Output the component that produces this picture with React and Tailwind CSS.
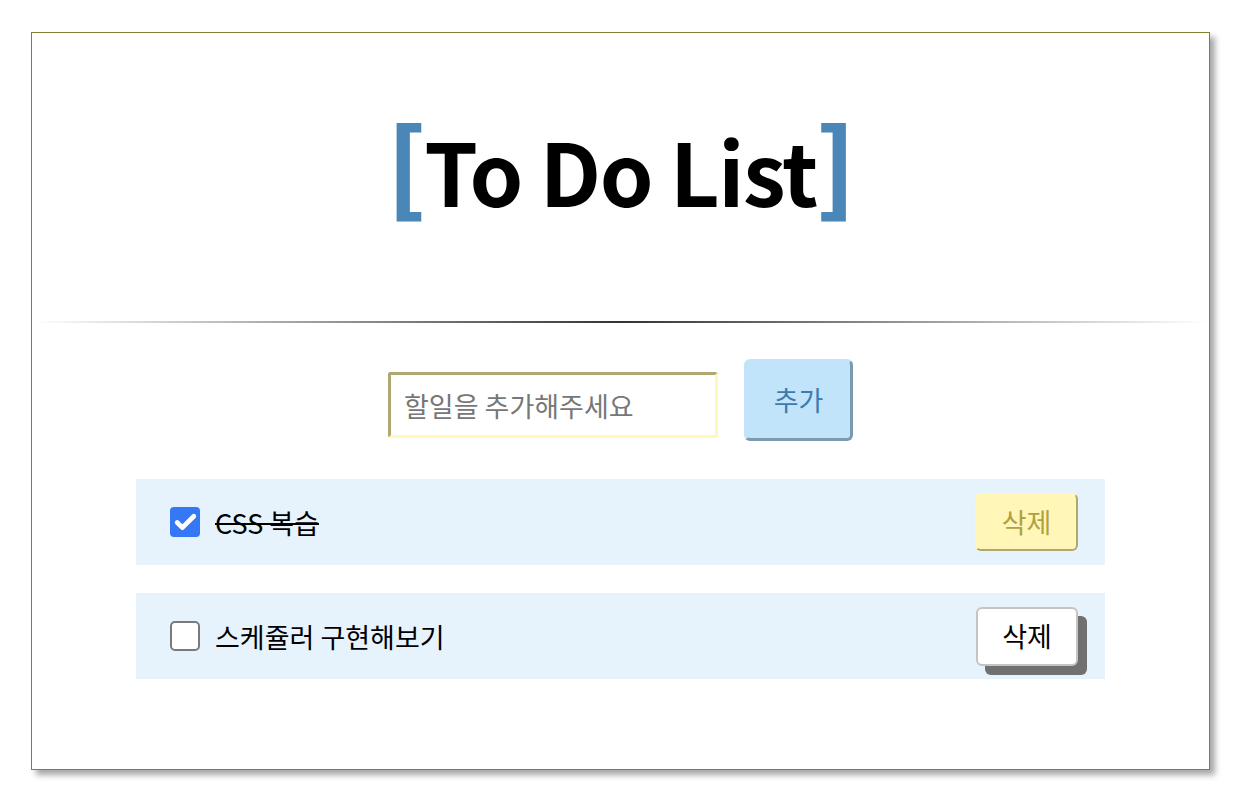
import { Check } from "lucide-react";

const font = { fontFamily: '"Noto Sans CJK KR", "Noto Sans", sans-serif' };

function TodoItem({ text, done }) {
  return (
    <li className="flex h-[86px] items-center bg-[#e6f2fc] pl-[34px] pr-[27px]">
      {done ? (
        <span className="flex h-[30px] w-[30px] items-center justify-center rounded-[4px] bg-[#3478f6]">
          <Check className="h-[25px] w-[25px] text-white" strokeWidth={4.5} />
        </span>
      ) : (
        <span className="h-[30px] w-[30px] rounded-[5px] border-2 border-[#7a7a7a] bg-white" />
      )}
      <span
        className={
          "ml-[15px] flex-1 text-[27px] leading-none text-black " +
          (done ? "line-through decoration-2" : "")
        }
      >
        {text}
      </span>
      {done ? (
        <button className="h-[58px] w-[103px] rounded-[6px] border-2 border-[#fff6b8] border-r-[#b0a870] border-b-[#b0a870] bg-[#fff6b8] text-[27px] text-[#b0a040]">
          삭제
        </button>
      ) : (
        <button className="h-[59px] w-[102px] rounded-[6px] border-2 border-[#c4c4c4] bg-white text-[27px] text-black shadow-[9px_9px_0_#707070]">
          삭제
        </button>
      )}
    </li>
  );
}

export default function App() {
  return (
    <div className="min-h-screen bg-white pt-[32px]" style={font}>
      <div className="ml-[31px] flex h-[738px] w-[1179px] flex-col border border-[#808030] bg-white shadow-[5px_5px_6px_rgba(0,0,0,0.35)]">
        <header className="flex h-[288px] items-center justify-center pb-[14px]">
          <h1 className="flex items-center text-[86px] font-bold leading-none tracking-[-1.5px] text-black">
            <span className="-translate-y-[9px] text-[100px] font-black text-[#4a86b8]">[</span>
            <span className="-mx-[1px]">To Do List</span>
            <span className="-translate-y-[9px] text-[100px] font-black text-[#4a86b8]">]</span>
          </h1>
        </header>
        <div className="h-[2px] bg-gradient-to-r from-transparent via-[#333333] to-transparent" />
        <div className="mt-[36px] flex items-start justify-center gap-[26px]">
          <input
            className="mt-[13px] h-[66px] w-[330px] rounded-[3px] border-[3px] border-[#b0a870] border-r-[#fff8b8] border-b-[#fff8b8] bg-white px-[13px] text-[27px] outline-none placeholder:text-[#777777]"
            placeholder="할일을 추가해주세요"
          />
          <button className="h-[82px] w-[109px] rounded-[6px] border-[3px] border-[#c2e4fa] border-r-[#7a9ab0] border-b-[#7a9ab0] bg-[#c2e4fa] text-[27px] text-[#3d7ab0]">
            추가
          </button>
        </div>
        <ul className="mt-[38px] flex flex-col gap-[28px] px-[104px]">
          <TodoItem text="CSS 복습" done />
          <TodoItem text="스케쥴러 구현해보기" />
        </ul>
      </div>
    </div>
  );
}
